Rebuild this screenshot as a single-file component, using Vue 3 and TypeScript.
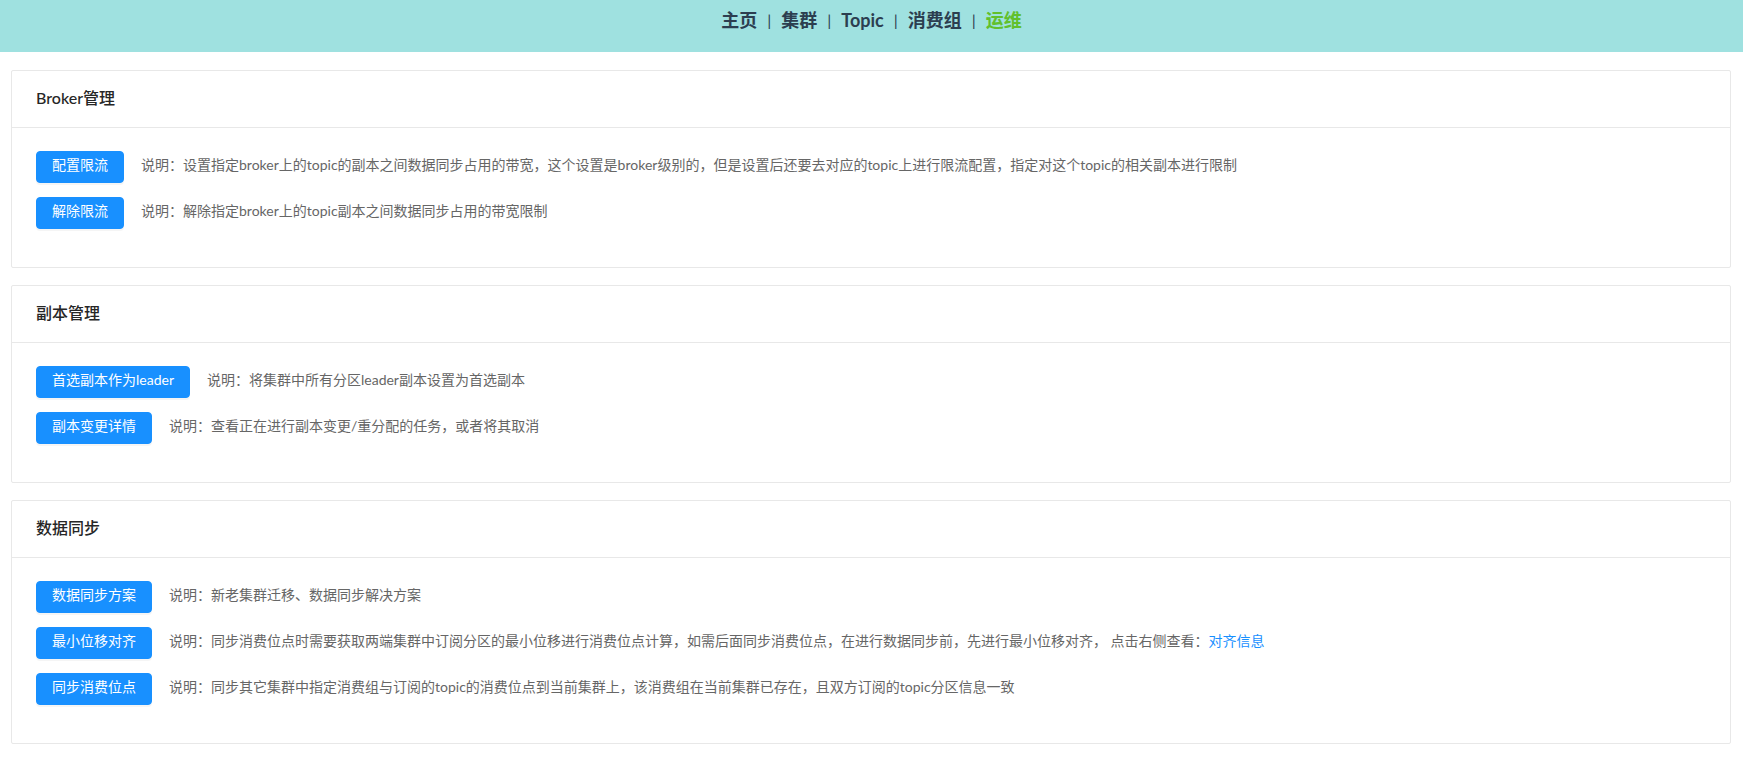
<script setup lang="ts">
interface NavItem {
  label: string
  active?: boolean
}

interface Operation {
  action: string
  description: string
  link?: string
}

interface Section {
  title: string
  operations: Operation[]
}

const navItems: NavItem[] = [
  { label: '主页' },
  { label: '集群' },
  { label: 'Topic' },
  { label: '消费组' },
  { label: '运维', active: true },
]

const sections: Section[] = [
  {
    title: 'Broker管理',
    operations: [
      {
        action: '配置限流',
        description:
          '说明：设置指定broker上的topic的副本之间数据同步占用的带宽，这个设置是broker级别的，但是设置后还要去对应的topic上进行限流配置，指定对这个topic的相关副本进行限制',
      },
      {
        action: '解除限流',
        description: '说明：解除指定broker上的topic副本之间数据同步占用的带宽限制',
      },
    ],
  },
  {
    title: '副本管理',
    operations: [
      {
        action: '首选副本作为leader',
        description: '说明：将集群中所有分区leader副本设置为首选副本',
      },
      {
        action: '副本变更详情',
        description: '说明：查看正在进行副本变更/重分配的任务，或者将其取消',
      },
    ],
  },
  {
    title: '数据同步',
    operations: [
      {
        action: '数据同步方案',
        description: '说明：新老集群迁移、数据同步解决方案',
      },
      {
        action: '最小位移对齐',
        description:
          '说明：同步消费位点时需要获取两端集群中订阅分区的最小位移进行消费位点计算，如需后面同步消费位点，在进行数据同步前，先进行最小位移对齐， 点击右侧查看：',
        link: '对齐信息',
      },
      {
        action: '同步消费位点',
        description:
          '说明：同步其它集群中指定消费组与订阅的topic的消费位点到当前集群上，该消费组在当前集群已存在，且双方订阅的topic分区信息一致',
      },
    ],
  },
]
</script>

<template>
  <div class="page">
    <nav class="nav">
      <template v-for="(item, index) in navItems" :key="item.label">
        <span v-if="index > 0" class="separator">|</span>
        <a href="#" class="nav-link" :class="{ active: item.active }">{{ item.label }}</a>
      </template>
    </nav>
    <main class="content">
      <section v-for="section in sections" :key="section.title" class="card">
        <h2 class="card-title">{{ section.title }}</h2>
        <div class="card-body">
          <div v-for="op in section.operations" :key="op.action" class="operation">
            <button type="button" class="action">{{ op.action }}</button>
            <p class="description">
              {{ op.description }}<a v-if="op.link" href="#" class="link">{{ op.link }}</a>
            </p>
          </div>
        </div>
      </section>
    </main>
  </div>
</template>

<style>
body {
  margin: 0;
  background: #fff;
}
</style>

<style scoped>
.page {
  font-family: Lato, "Noto Sans CJK SC", sans-serif;
  font-size: 14px;
  color: #2c3e50;
}

.nav {
  box-sizing: border-box;
  height: 52px;
  padding-bottom: 12px;
  display: flex;
  justify-content: center;
  align-items: center;
  gap: 10px;
  background: #9fe1e0;
}

.nav-link {
  font-size: 18px;
  font-weight: 700;
  line-height: 24px;
  color: #2c3e50;
  text-decoration: none;
}

.nav-link.active {
  color: #61c02c;
}

.separator {
  font-size: 16px;
  line-height: 20px;
}

.content {
  padding: 18px 12px 31px 11px;
  display: flex;
  flex-direction: column;
  gap: 17px;
}

.card {
  border: 1px solid #e8e8e8;
  border-radius: 2px;
  background: #fff;
}

.card-title {
  margin: 0;
  padding: 15px 24px 17px;
  border-bottom: 1px solid #e8e8e8;
  font-size: 16px;
  font-weight: 500;
  line-height: 24px;
  color: #262626;
}

.card-body {
  padding: 23px 24px 38px;
  display: flex;
  flex-direction: column;
  gap: 14px;
}

.operation {
  display: flex;
  align-items: center;
  gap: 17px;
}

.action {
  flex: none;
  box-sizing: border-box;
  height: 32px;
  padding: 0 15px 4px;
  border: 1px solid #1890ff;
  border-radius: 4px;
  background: #1890ff;
  box-shadow: 0 2px 0 rgba(0, 0, 0, 0.04);
  font-family: inherit;
  font-size: 14px;
  line-height: 20px;
  color: #fff;
  cursor: pointer;
}

.description {
  margin: 0;
  padding-bottom: 4px;
  line-height: 22px;
  color: #666;
}

.link {
  color: #1890ff;
  text-decoration: none;
}
</style>
